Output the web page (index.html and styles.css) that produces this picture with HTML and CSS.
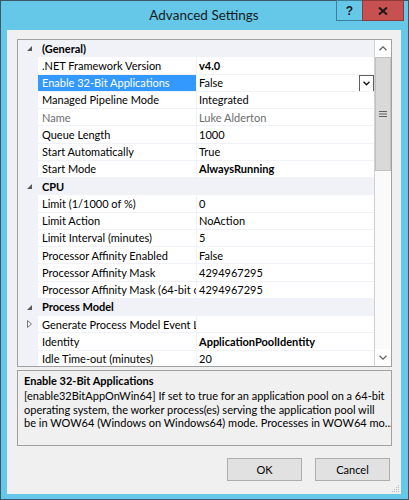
FILE: index.html
```html
<!DOCTYPE html>
<html>
<head>
<meta charset="utf-8">
<link rel="stylesheet" href="styles.css">
</head>
<body>
<div class="window">
  <div class="titlebar">
    <div></div>
    <div class="title">Advanced Settings</div>
    <div class="caption">
      <div class="cap-help">?</div>
      <div class="cap-close"><svg width="10" height="8" viewBox="0 0 10 8"><path d="M1 0.5 L9 7.5 M9 0.5 L1 7.5" stroke="#1a1a1a" stroke-width="2"/></svg></div>
    </div>
  </div>
  <div class="client">
    <div class="grid">
      <div class="rows">
        <div class="row cat"><span class="margin"><svg class="exp" width="5" height="5" viewBox="0 0 5 5"><polygon points="5,0 5,5 0,5" fill="#595959"/></svg></span><span class="cat-label">(General)</span></div>
        <div class="row"><span class="margin"></span><span class="name">.NET Framework Version</span><span class="value b">v4.0</span></div>
        <div class="row sel"><span class="margin"></span><span class="name">Enable 32-Bit Applications</span><span class="value"><span>False</span><span class="dd"><svg width="7" height="5" viewBox="0 0 7 5"><polyline points="0.5,0.8 3.5,3.8 6.5,0.8" fill="none" stroke="#1a1a1a" stroke-width="1.4"/></svg></span></span></div>
        <div class="row"><span class="margin"></span><span class="name">Managed Pipeline Mode</span><span class="value">Integrated</span></div>
        <div class="row ro"><span class="margin"></span><span class="name">Name</span><span class="value">Luke Alderton</span></div>
        <div class="row"><span class="margin"></span><span class="name">Queue Length</span><span class="value">1000</span></div>
        <div class="row"><span class="margin"></span><span class="name">Start Automatically</span><span class="value">True</span></div>
        <div class="row"><span class="margin"></span><span class="name">Start Mode</span><span class="value b">AlwaysRunning</span></div>
        <div class="row cat"><span class="margin"><svg class="exp" width="5" height="5" viewBox="0 0 5 5"><polygon points="5,0 5,5 0,5" fill="#595959"/></svg></span><span class="cat-label">CPU</span></div>
        <div class="row"><span class="margin"></span><span class="name">Limit (1/1000 of %)</span><span class="value">0</span></div>
        <div class="row"><span class="margin"></span><span class="name">Limit Action</span><span class="value">NoAction</span></div>
        <div class="row"><span class="margin"></span><span class="name">Limit Interval (minutes)</span><span class="value">5</span></div>
        <div class="row"><span class="margin"></span><span class="name">Processor Affinity Enabled</span><span class="value">False</span></div>
        <div class="row"><span class="margin"></span><span class="name">Processor Affinity Mask</span><span class="value">4294967295</span></div>
        <div class="row"><span class="margin"></span><span class="name">Processor Affinity Mask (64-bit option)</span><span class="value">4294967295</span></div>
        <div class="row cat"><span class="margin"><svg class="exp" width="5" height="5" viewBox="0 0 5 5"><polygon points="5,0 5,5 0,5" fill="#595959"/></svg></span><span class="cat-label">Process Model</span></div>
        <div class="row"><span class="margin"><svg class="col" width="5" height="8" viewBox="0 0 5 8"><polygon points="0.5,0.5 4.5,4 0.5,7.5" fill="none" stroke="#7a7a7a" stroke-width="1"/></svg></span><span class="name">Generate Process Model Event Log Entry</span><span class="value"></span></div>
        <div class="row"><span class="margin"></span><span class="name">Identity</span><span class="value b">ApplicationPoolIdentity</span></div>
        <div class="row"><span class="margin"></span><span class="name">Idle Time-out (minutes)</span><span class="value">20</span></div>
      </div>
      <div class="scrollbar">
        <div class="sb-btn"><svg width="8" height="5" viewBox="0 0 8 5"><polyline points="0.5,4.2 4,0.8 7.5,4.2" fill="none" stroke="#606060" stroke-width="1.2"/></svg></div>
        <div class="sb-thumb"><svg width="8" height="6" viewBox="0 0 8 6"><path d="M0 0.5 H8 M0 3 H8 M0 5.5 H8" stroke="#606060" stroke-width="1"/></svg></div>
        <div class="sb-track"></div>
        <div class="sb-btn"><svg width="8" height="5" viewBox="0 0 8 5"><polyline points="0.5,0.8 4,4.2 7.5,0.8" fill="none" stroke="#606060" stroke-width="1.2"/></svg></div>
      </div>
    </div>
    <div class="desc">
      <div class="desc-title">Enable 32-Bit Applications</div>
      <div class="desc-text">[enable32BitAppOnWin64] If set to true for an application pool on a 64-bit<br>operating system, the worker process(es) serving the application pool will<br>be in WOW64 (Windows on Windows64) mode. Processes in WOW64 mo...</div>
    </div>
    <div class="buttons">
      <div class="btn">OK</div>
      <div class="btn">Cancel</div>
    </div>
    <svg class="grip" width="8" height="8" viewBox="0 0 8 8"><g fill="#b8b8b8"><rect x="6" y="0" width="1" height="1"/><rect x="4" y="2" width="1" height="1"/><rect x="6" y="2" width="1" height="1"/><rect x="2" y="4" width="1" height="1"/><rect x="4" y="4" width="1" height="1"/><rect x="6" y="4" width="1" height="1"/><rect x="0" y="6" width="1" height="1"/><rect x="2" y="6" width="1" height="1"/><rect x="4" y="6" width="1" height="1"/><rect x="6" y="6" width="1" height="1"/></g></svg>
  </div>
</div>
</body>
</html>
```

FILE: styles.css
```css
* { box-sizing: border-box; }
html, body { margin: 0; padding: 0; }
body {
  width: 409px;
  height: 500px;
  font-family: Lato, "Noto Sans", sans-serif;
  font-size: 11px;
  color: #000;
  overflow: hidden;
}
.window {
  width: 409px;
  height: 500px;
  border: 1px solid #3b5866;
  background: #66c8e9;
  padding: 0 7px 5px 6px;
  display: flex;
  flex-direction: column;
}
.titlebar {
  height: 29px;
  flex: none;
  display: grid;
  grid-template-columns: 1fr auto 1fr;
  align-items: start;
}
.title {
  font-size: 13.5px;
  color: #1b1b1b;
  padding-top: 5px;
  line-height: 18px;
}
.caption {
  justify-self: end;
  display: flex;
  margin-top: -1px;
  margin-right: -3px;
}
.cap-help {
  width: 26px;
  height: 21px;
  border: 1px solid #3d7f97;
  border-right: none;
  background: #66c8e9;
  font-weight: bold;
  font-size: 12px;
  color: #1a1a1a;
  display: flex;
  align-items: center;
  justify-content: center;
  font-family: "Liberation Sans", sans-serif;
}
.cap-close {
  width: 42px;
  height: 21px;
  border: 1px solid #8e3a3a;
  background: #c75050;
  display: flex;
  align-items: center;
  justify-content: center;
}
.client {
  flex: 1;
  background: #f0f0f0;
  padding: 9px 9px 0 10px;
  display: flex;
  flex-direction: column;
  position: relative;
}
.grid {
  height: 328px;
  flex: none;
  border: 1px solid #a0a0a0;
  display: flex;
  background: #fff;
}
.rows {
  width: 356px;
  overflow: hidden;
  background: #f0f2f7;
}
.row {
  height: 17.25px;
  display: grid;
  grid-template-columns: 20px 158px 178px;
  border-bottom: 1px solid #f0f2f7;
  white-space: nowrap;
}
.margin {
  background: #f0f2f7;
  display: flex;
  align-items: center;
  padding-left: 9px;
}
.name {
  background: #fff;
  padding-left: 4px;
  overflow: hidden;
  display: flex;
  align-items: center;
}
.value {
  background: #fff;
  border-left: 1px solid #f0f2f7;
  padding-left: 2px;
  overflow: hidden;
  display: flex;
  align-items: center;
  justify-content: space-between;
}
.b { font-weight: bold; }
.ro .name, .ro .value { color: #6d6d6d; }
.sel .name { background: #3399ff; color: #fff; }
.cat { grid-template-columns: 20px 336px; }
.cat-label {
  font-weight: bold;
  padding-left: 4px;
  display: flex;
  align-items: center;
}
.exp { margin-top: 1px; }
.dd {
  width: 15px;
  align-self: stretch;
  margin-bottom: -1px;
  border: 1px solid #5f5f5f;
  background: #fff;
  display: flex;
  align-items: center;
  justify-content: center;
}
.scrollbar {
  width: 17px;
  border-left: 1px solid #d0d0d0;
  background: #fafafa;
  display: flex;
  flex-direction: column;
}
.sb-btn {
  height: 17px;
  background: #fff;
  display: flex;
  align-items: center;
  justify-content: center;
}
.sb-thumb {
  height: 114px;
  background: #d9d9d9;
  border: 1px solid #c2c2c2;
  display: flex;
  align-items: center;
  justify-content: center;
}
.sb-track { flex: 1; }
.desc {
  margin-top: 3px;
  height: 76px;
  flex: none;
  border: 1px solid #a0a0a0;
  background: #f0f0f0;
  padding: 3px 6px 0;
  line-height: 13.3px;
  white-space: nowrap;
  overflow: hidden;
}
.desc-title { font-weight: bold; margin-bottom: 2px; }
.buttons {
  margin-top: 12px;
  margin-right: 2px;
  display: flex;
  justify-content: flex-end;
  gap: 13px;
}
.btn {
  width: 75px;
  height: 23px;
  border: 1px solid #adadad;
  background: #e1e1e1;
  display: flex;
  align-items: center;
  justify-content: center;
}
.grip {
  position: absolute;
  right: 1px;
  bottom: 1px;
}
```
